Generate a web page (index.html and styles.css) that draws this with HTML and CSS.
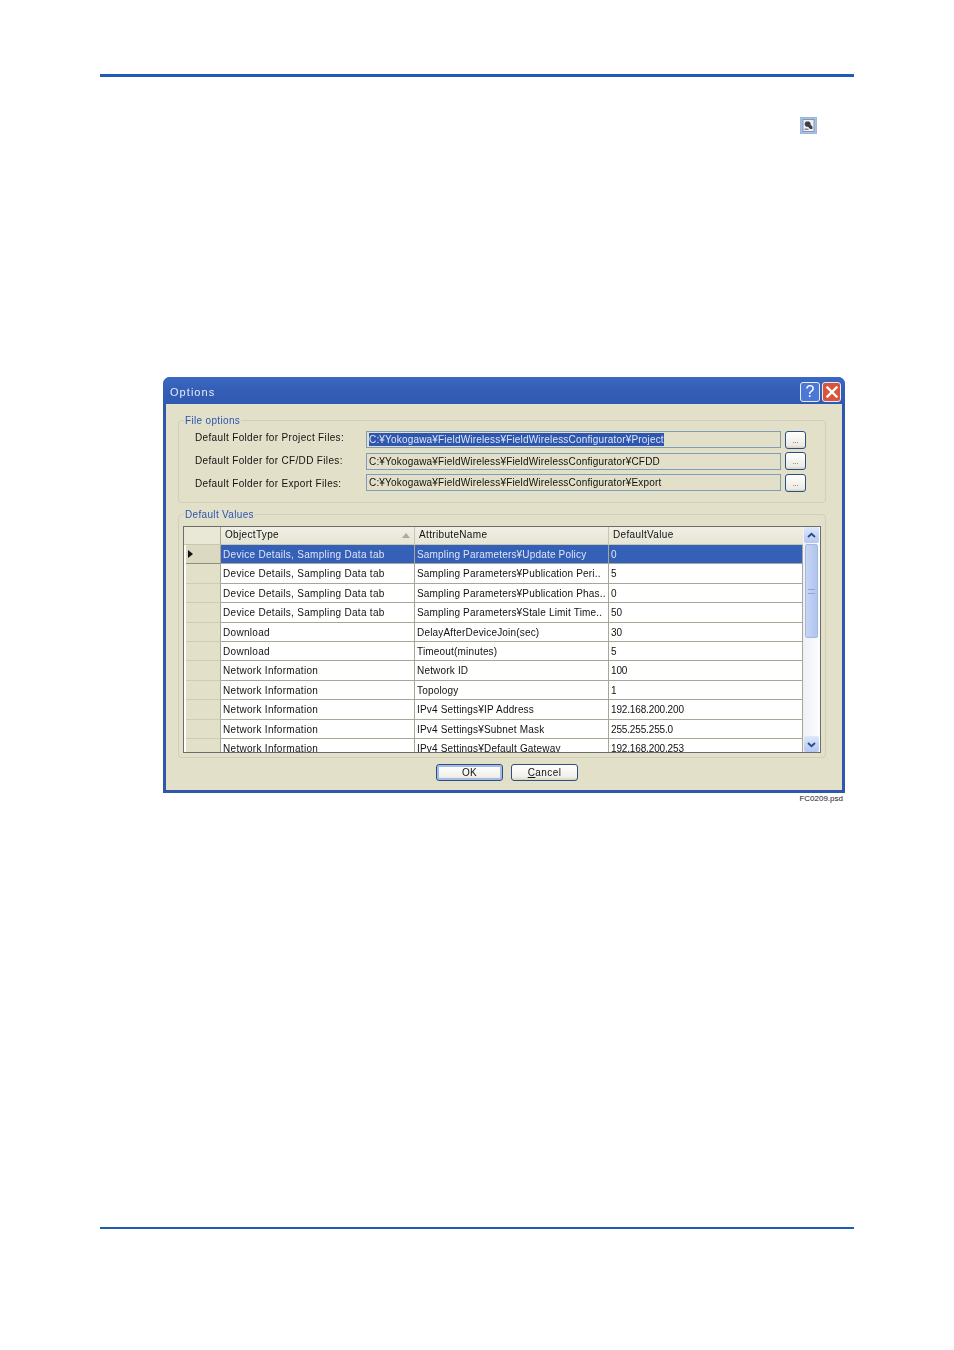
FILE: index.html
```html
<!DOCTYPE html>
<html lang="en">
<head>
<meta charset="utf-8">
<title>Options</title>
<link rel="stylesheet" href="styles.css">
</head>
<body>
<main class="page">
  <div class="rule rule-top"></div>
  <div class="tool-row">
    <span class="tool-icon">
      <svg width="17" height="17" viewBox="0 0 17 17">
        <rect x="0.5" y="0.5" width="16" height="16" fill="#a9c0e6" stroke="#9db7e0"/>
        <rect x="3" y="2.5" width="11" height="12" fill="#eef0f2" stroke="#8c96a8"/>
        <path d="M6 4.500h3l1.600 1.600v1.600l1.800 1.800v2.500h-2.200L8 9.800H6.200L4.800 8V6z" fill="#3a3f4c"/>
        <rect x="4.500" y="11.500" width="4" height="1.500" fill="#7f8798"/>
      </svg>
    </span>
  </div>
  <section class="dialog">
    <header class="titlebar">
      <span class="title">Options</span>
      <span class="caption-btns">
        <span class="cap-btn cap-help">?</span>
        <span class="cap-btn cap-close">
          <svg width="12" height="12" viewBox="0 0 12 12"><path d="M1.500 1.500L10.500 10.500M10.500 1.500L1.500 10.500" stroke="#fff" stroke-width="2.300" stroke-linecap="square"/></svg>
        </span>
      </span>
    </header>
    <div class="dialog-body">
      <fieldset class="group group-files">
        <legend>File options</legend>
        <div class="file-row">
          <label class="file-label label-high">Default Folder for Project Files:</label>
          <div class="file-input"><span class="sel">C:¥Yokogawa¥FieldWireless¥FieldWirelessConfigurator¥Project</span></div>
          <span class="browse">...</span>
        </div>
        <div class="file-row">
          <label class="file-label">Default Folder for CF/DD Files:</label>
          <div class="file-input">C:¥Yokogawa¥FieldWireless¥FieldWirelessConfigurator¥CFDD</div>
          <span class="browse">...</span>
        </div>
        <div class="file-row">
          <label class="file-label label-low">Default Folder for Export Files:</label>
          <div class="file-input">C:¥Yokogawa¥FieldWireless¥FieldWirelessConfigurator¥Export</div>
          <span class="browse">...</span>
        </div>
      </fieldset>
      <fieldset class="group group-values">
        <legend>Default Values</legend>
        <div class="grid">
          <div class="grid-main">
            <div class="g-row g-head">
              <div class="g-rowhead"></div>
              <div class="g-cell">ObjectType<span class="sort"></span></div>
              <div class="g-cell">AttributeName</div>
              <div class="g-cell">DefaultValue</div>
            </div>
            <div class="g-row is-selected">
              <div class="g-rowhead"><span class="arrow"></span></div>
              <div class="g-cell">Device Details, Sampling Data tab</div>
              <div class="g-cell">Sampling Parameters¥Update Policy</div>
              <div class="g-cell">0</div>
            </div>
            <div class="g-row">
              <div class="g-rowhead"></div>
              <div class="g-cell">Device Details, Sampling Data tab</div>
              <div class="g-cell">Sampling Parameters¥Publication Peri..</div>
              <div class="g-cell">5</div>
            </div>
            <div class="g-row">
              <div class="g-rowhead"></div>
              <div class="g-cell">Device Details, Sampling Data tab</div>
              <div class="g-cell">Sampling Parameters¥Publication Phas..</div>
              <div class="g-cell">0</div>
            </div>
            <div class="g-row">
              <div class="g-rowhead"></div>
              <div class="g-cell">Device Details, Sampling Data tab</div>
              <div class="g-cell">Sampling Parameters¥Stale Limit Time..</div>
              <div class="g-cell">50</div>
            </div>
            <div class="g-row">
              <div class="g-rowhead"></div>
              <div class="g-cell">Download</div>
              <div class="g-cell">DelayAfterDeviceJoin(sec)</div>
              <div class="g-cell">30</div>
            </div>
            <div class="g-row">
              <div class="g-rowhead"></div>
              <div class="g-cell">Download</div>
              <div class="g-cell">Timeout(minutes)</div>
              <div class="g-cell">5</div>
            </div>
            <div class="g-row">
              <div class="g-rowhead"></div>
              <div class="g-cell">Network Information</div>
              <div class="g-cell">Network ID</div>
              <div class="g-cell">100</div>
            </div>
            <div class="g-row">
              <div class="g-rowhead"></div>
              <div class="g-cell">Network Information</div>
              <div class="g-cell">Topology</div>
              <div class="g-cell">1</div>
            </div>
            <div class="g-row">
              <div class="g-rowhead"></div>
              <div class="g-cell">Network Information</div>
              <div class="g-cell">IPv4 Settings¥IP Address</div>
              <div class="g-cell">192.168.200.200</div>
            </div>
            <div class="g-row">
              <div class="g-rowhead"></div>
              <div class="g-cell">Network Information</div>
              <div class="g-cell">IPv4 Settings¥Subnet Mask</div>
              <div class="g-cell">255.255.255.0</div>
            </div>
            <div class="g-row">
              <div class="g-rowhead"></div>
              <div class="g-cell">Network Information</div>
              <div class="g-cell">IPv4 Settings¥Default Gateway</div>
              <div class="g-cell">192.168.200.253</div>
            </div>
          </div>
          <div class="scrollbar">
            <span class="sb-btn">
              <svg width="9" height="7" viewBox="0 0 9 7"><path d="M1 5L4.500 1.800L8 5" fill="none" stroke="#2c4a86" stroke-width="1.800"/></svg>
            </span>
            <span class="sb-thumb"><span class="sb-grip"></span></span>
            <span class="sb-track"></span>
            <span class="sb-btn">
              <svg width="9" height="7" viewBox="0 0 9 7"><path d="M1 2L4.500 5.200L8 2" fill="none" stroke="#2c4a86" stroke-width="1.800"/></svg>
            </span>
          </div>
        </div>
      </fieldset>
      <div class="actions">
        <span class="btn btn-default">OK</span>
        <span class="btn"><u>C</u>ancel</span>
      </div>
    </div>
  </section>
  <div class="fig-id">FC0209.psd</div>
  <div class="rule rule-bottom"></div>
</main>
</body>
</html>
```

FILE: styles.css
```css
html, body {
  margin: 0;
  padding: 0;
  background: #fff;
}
.page {
  width: 754px;
  height: 1350px;
  box-sizing: border-box;
  padding-top: 74px;
  margin-left: 100px;
  font-family: "Liberation Sans", Arial, sans-serif;
  overflow: hidden;
}
.rule-top {
  height: 3px;
  background: #1f5cb4;
}
.rule-bottom {
  height: 2px;
  background: #1f5cb4;
  margin-top: 424px;
}
.tool-row {
  display: flex;
  justify-content: flex-end;
  padding: 40px 37px 0 0;
  height: 17px;
}
.tool-icon {
  display: block;
  width: 17px;
  height: 17px;
  filter: blur(0.4px);
}
.tool-icon svg { display: block; }

.dialog {
  width: 682px;
  height: 416px;
  box-sizing: border-box;
  margin: 243px 0 0 63px;
  background: #2f57ae;
  border-radius: 7px 7px 0 0;
  padding: 0 3px 3px;
  filter: blur(0.4px);
  font-size: 10px;
  line-height: 12px;
  color: #111;
  display: flex;
  flex-direction: column;
}
.titlebar {
  height: 27px;
  flex: none;
  display: flex;
  align-items: center;
  justify-content: space-between;
  background: linear-gradient(#3a68c4 0, #3560b8 40%, #3059b0 100%);
  margin: 0 -3px;
  padding: 3px 4px 0 7px;
  box-sizing: border-box;
  border-radius: 7px 7px 0 0;
}
.title {
  color: #e6eaf6;
  font-size: 11px;
  letter-spacing: 1.050px;
}
.caption-btns {
  display: flex;
  gap: 2px;
}
.cap-btn {
  width: 18px;
  height: 18px;
  border: 1px solid #e6ecf8;
  border-radius: 3px;
  display: flex;
  align-items: center;
  justify-content: center;
  color: #fff;
  font-size: 16px;
  line-height: 18px;
}
.cap-help { background: #4a78d4; }
.cap-close { width: 17px; background: #d8553a; }

.dialog-body {
  flex: 1;
  background: #e3e0ca;
  padding: 10px 16px 0 12px;
  min-height: 0;
}
.group {
  margin: 0;
  padding: 0;
  border: 1px solid #d2cfb8;
  border-radius: 4px;
  min-width: 0;
}
.group legend {
  padding: 0 1px;
  color: #2a55b0;
  font-size: 10px;
  line-height: 12px;
  letter-spacing: 0.330px;
  position: relative;
  top: 1px;
}
.group-files legend { margin-left: -11px; }
.group-values legend { margin-left: 1px; }
.group-files {
  height: 89px;
  box-sizing: border-box;
  padding: 5px 19px 0 16px;
}
.file-row {
  display: flex;
  align-items: center;
  height: 17px;
  margin-bottom: 4.500px;
}
.file-label {
  width: 171px;
  flex: none;
  letter-spacing: 0.340px;
  white-space: nowrap;
}
.label-high { margin-bottom: 4px; }
.label-low { margin-top: 2px; }
.file-input {
  width: 415px;
  height: 17px;
  flex: none;
  box-sizing: border-box;
  border: 1px solid #7f9db9;
  padding: 1px 2px;
  line-height: 13px;
  letter-spacing: 0.180px;
  white-space: nowrap;
  overflow: hidden;
}
.sel {
  background: #2f57ae;
  color: #dfe5f5;
  display: inline-block;
}
.browse {
  margin-left: 4px;
  width: 21px;
  height: 18px;
  box-sizing: border-box;
  flex: none;
  border: 1px solid #2c4f80;
  border-radius: 3px;
  background: linear-gradient(#fff, #ecebe3 85%, #d6d0c0);
  color: #555;
  font-size: 8px;
  line-height: 17px;
  text-align: center;
}
.group-values {
  margin-top: 5px;
  height: 250px;
  box-sizing: border-box;
  padding: 6px 4px 0 4px;
}
.grid {
  display: flex;
  height: 227px;
  box-sizing: border-box;
  border: 1px solid #6c6c68;
  background: #fff;
  overflow: hidden;
}
.grid-main {
  flex: 1;
  min-width: 0;
}
.g-row {
  display: grid;
  grid-template-columns: 37px 194px 194px 1fr;
  height: 19.400px;
  box-sizing: border-box;
  background: #fff;
}
.g-cell {
  border-bottom: 1px solid #a9a698;
  border-right: 1px solid #a9a698;
  padding: 4px 0 0 2px;
  letter-spacing: 0.300px;
  white-space: nowrap;
  overflow: hidden;
}
.g-cell:nth-child(3) { letter-spacing: 0.180px; }
.g-cell:nth-child(4) { letter-spacing: -0.150px; }
.g-rowhead {
  background: #e3e0ca;
  border-right: 1px solid #a9a698;
  border-bottom: 1px solid #cfccb6;
  margin-left: 2px;
  position: relative;
}
.g-head {
  height: 18px;
  background: #ecebdd;
}
.g-head .g-rowhead {
  margin-left: 0;
  background: #e9e7d6;
  border-bottom: 1px solid #c9c6b0;
}
.g-head .g-cell {
  background: linear-gradient(#f0efe4, #e7e5d5);
  border-bottom: 1px solid #c9c6b0;
  border-right: 1px solid #c9c6b0;
  padding: 2px 0 0 4px;
  position: relative;
  letter-spacing: 0.340px;
}
.g-head .g-cell:last-child { border-right: 0; }
.sort {
  position: absolute;
  right: 4px;
  top: 6px;
  border-left: 4px solid transparent;
  border-right: 4px solid transparent;
  border-bottom: 5px solid #aeaa9c;
}
.is-selected .g-cell {
  background: #3560b8;
  color: #dfe5f5;
}
.is-selected .g-rowhead {
  background: #dcd9c2;
  border-bottom: 1px solid #8f8d7d;
}
.arrow {
  position: absolute;
  left: 2px;
  top: 5px;
  border-top: 4.500px solid transparent;
  border-bottom: 4.500px solid transparent;
  border-left: 5px solid #111;
}
.scrollbar {
  width: 17px;
  flex: none;
  background: linear-gradient(90deg, #eef0f5, #fdfdfd);
  display: flex;
  flex-direction: column;
}
.sb-btn {
  width: 15px;
  height: 16px;
  margin: 0 1px;
  flex: none;
  border-radius: 2px;
  background: linear-gradient(#dfe8fb, #b3c7f2);
  border: 0;
  display: flex;
  align-items: center;
  justify-content: center;
}
.sb-thumb {
  height: 94px;
  width: 13px;
  margin: 1px 2px 0;
  flex: none;
  background: linear-gradient(90deg, #c6d5f4, #b0c4ee);
  border: 1px solid #a4b8e2;
  box-sizing: border-box;
  border-radius: 2px;
  display: flex;
  align-items: center;
  justify-content: center;
}
.sb-grip {
  width: 7px;
  height: 3px;
  border-top: 1px solid #8ea6dc;
  border-bottom: 1px solid #8ea6dc;
}
.sb-track { flex: 1; }
.actions {
  display: flex;
  justify-content: flex-start;
  gap: 8px;
  padding: 6px 0 0 258px;
}
.btn {
  width: 67px;
  height: 17px;
  box-sizing: border-box;
  border: 1px solid #2c4f80;
  border-radius: 3px;
  background: linear-gradient(#fff, #f0efe7 80%, #d8d3c3);
  text-align: center;
  line-height: 15px;
  letter-spacing: 0.400px;
}
.btn-default {
  box-shadow: inset 0 0 0 2px #a3bbe6;
}
.fig-id {
  width: 743px;
  text-align: right;
  font-size: 8px;
  line-height: 9px;
  margin-top: 1px;
  color: #222;
}
```
